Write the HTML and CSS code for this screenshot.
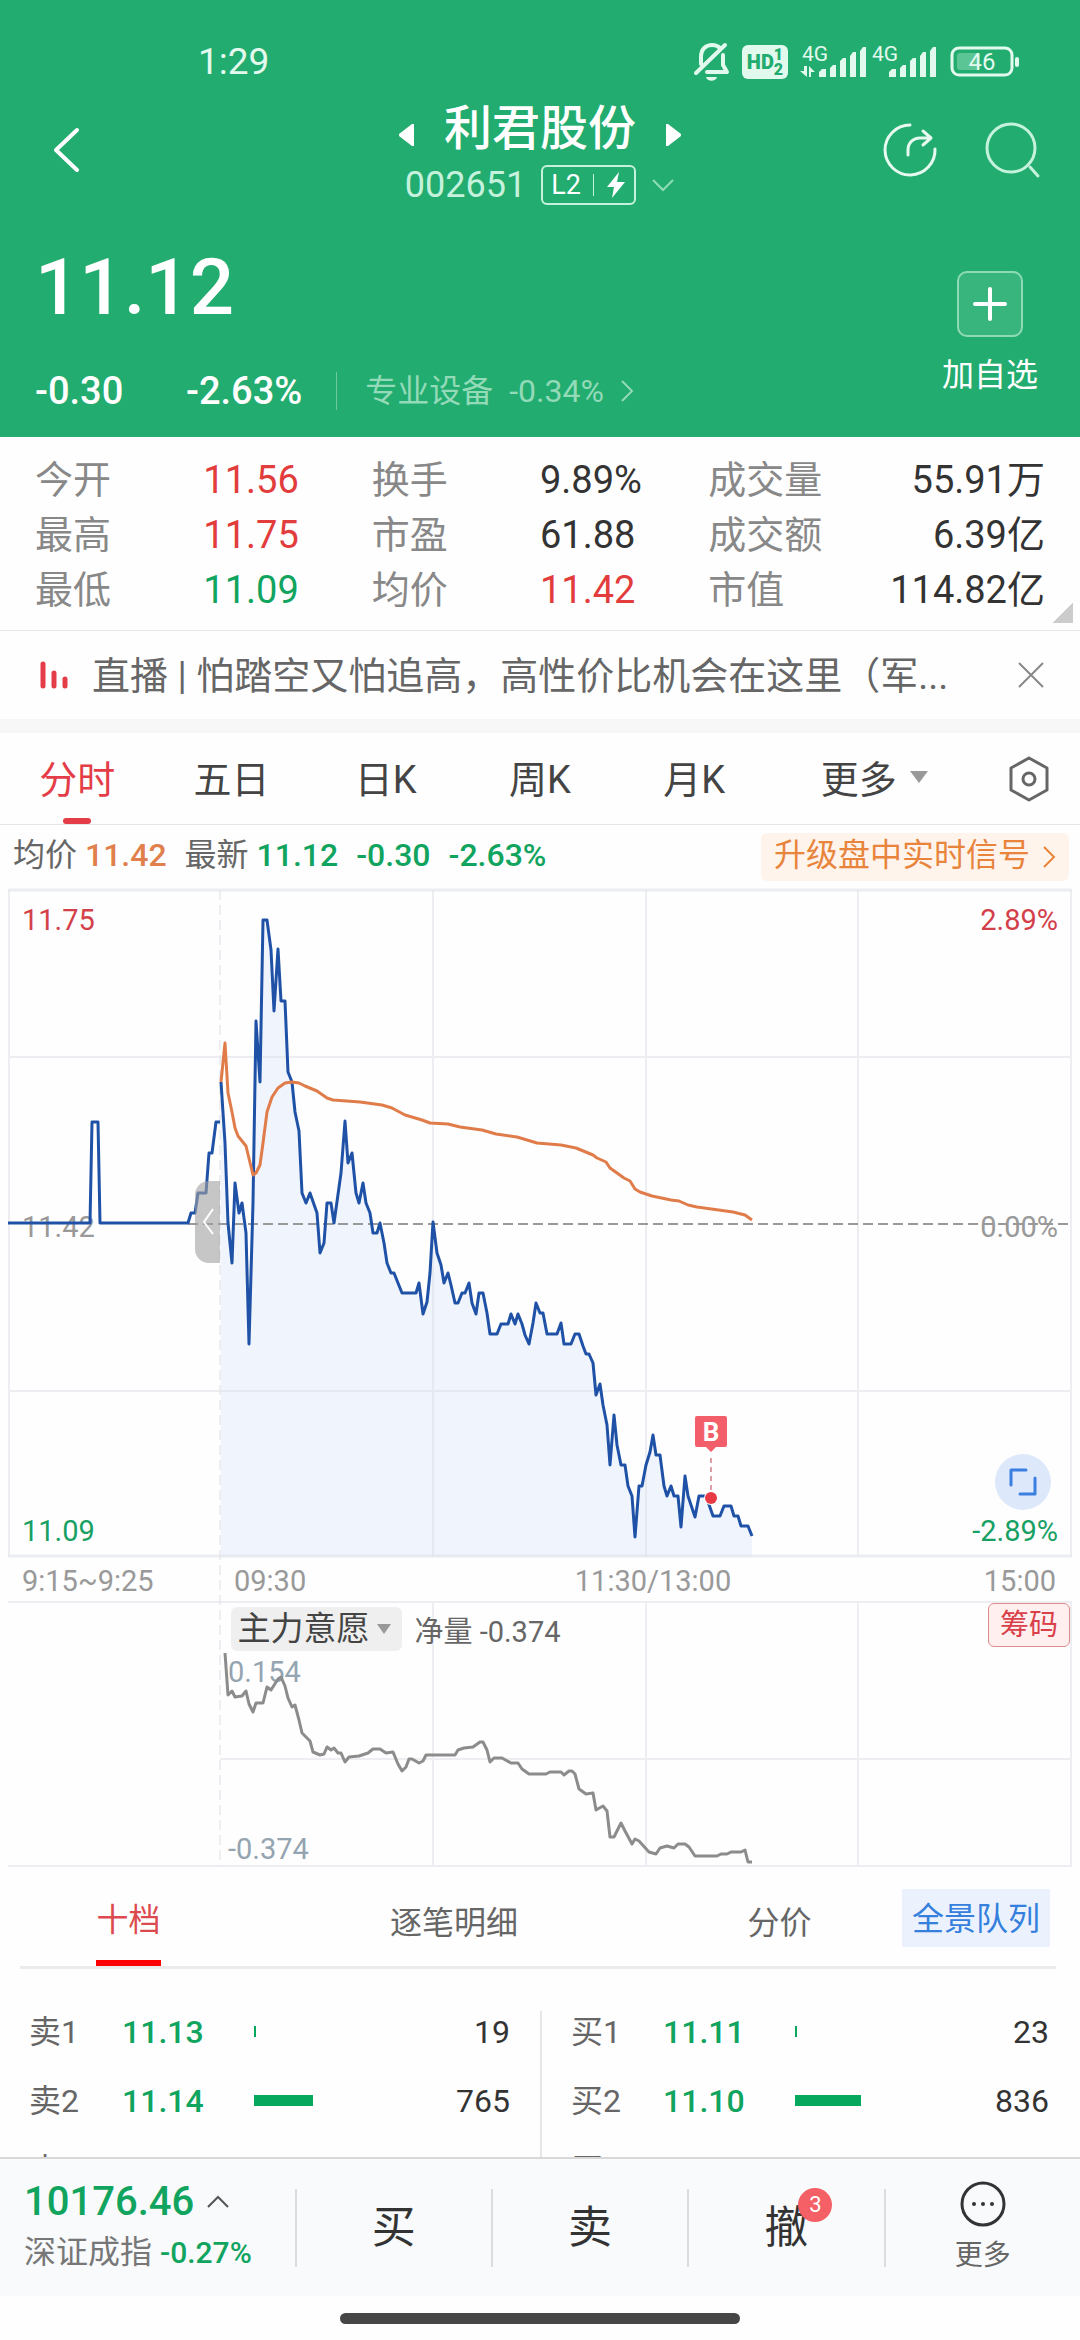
FILE: index.html
```html
<!DOCTYPE html>
<html lang="zh-CN">
<head>
    <meta charset="UTF-8">
    <meta name="viewport" content="width=device-width, initial-scale=1.0">
    <title>利君股份 002651</title>
    <link rel="stylesheet" href="styles.css">
</head>
<body>
<div class="app">
    <header class="header">
        <div class="status-bar">
            <span class="time">1:29</span>
            <div class="status-icons">
                <svg width="36" height="40" viewBox="0 0 36 40" fill="none" stroke="#e2f9ee" stroke-width="4" stroke-linecap="round" stroke-linejoin="round">
                    <path d="M7 22V15C7 7 12 3 18 3c4 0 6 1 8 3M29 13v10l4 7H13M2 31L31 3"/>
                    <path d="M12 35h11c-1 5-10 5-11 0z" fill="#e2f9ee" stroke="none"/>
                </svg>
                <span class="hd">HD<small>1<br>2</small></span>
                <svg class="signal-a" width="66" height="36" viewBox="0 0 66 36" fill="#e2f9ee">
                    <text x="2" y="17" font-size="21">4G</text>
                    <path d="M4 22h3v11L0 27h4zM9 33V22l6 6h-4v5zM19 33v-5l3-3h4v8zM30 33V24l3-3h3v12zM40 33V17l3-3h3v19zM50 33V12l3-4h3v25zM60 33V7l3-4h3v30z"/>
                </svg>
                <svg width="66" height="36" viewBox="0 0 66 36" fill="#e2f9ee">
                    <text x="0" y="17" font-size="21">4G</text>
                    <path d="M17 33v-5l3-3h4v8zM28 33V24l3-3h3v12zM38 33V17l3-3h3v19zM48 33V12l3-4h3v25zM58 33V7l3-4h3v30z"/>
                </svg>
                <svg class="battery" width="70" height="32" viewBox="0 0 70 32">
                    <rect x="2" y="2" width="60" height="27" rx="7" fill="none" stroke="#e2f9ee" stroke-width="3"/>
                    <rect x="7" y="7" width="23" height="17" rx="3" fill="#5cc595"/>
                    <rect x="65" y="11" width="4" height="10" rx="2" fill="#e2f9ee"/>
                    <text x="32" y="24" font-size="24" text-anchor="middle" fill="#e2f9ee">46</text>
                </svg>
            </div>
        </div>

        <nav class="nav">
            <button class="icon-btn back" aria-label="返回">
                <svg width="28" height="46" viewBox="0 0 28 46" fill="none" stroke="#fff" stroke-width="4" stroke-linecap="round" stroke-linejoin="round"><path d="M25 3L4 23l21 20"/></svg>
            </button>
            <div class="title-block">
                <div class="title-row">
                    <button class="icon-btn" aria-label="上一只"><svg width="17" height="24" viewBox="0 0 17 24"><path d="M16 1v22h-2L1 13v-2L14 1z" fill="#fff"/></svg></button>
                    <h1>利君股份</h1>
                    <button class="icon-btn" aria-label="下一只"><svg width="17" height="24" viewBox="0 0 17 24"><path d="M1 1v22h2l13-10v-2L3 1z" fill="#fff"/></svg></button>
                </div>
                <div class="code-row">
                    <span class="code">002651</span>
                    <span class="level">L2<i></i><svg width="20" height="28" viewBox="0 0 20 28"><path d="M13 1L1 16h7L6 27 19 11h-8z" fill="#fff"/></svg></span>
                    <svg width="24" height="14" viewBox="0 0 24 14" fill="none" stroke="#8fdcb7" stroke-width="2"><path d="M2 2l10 10L22 2"/></svg>
                </div>
            </div>
            <div class="actions">
                <button class="icon-btn" aria-label="分享">
                    <svg width="56" height="56" viewBox="0 0 56 56" fill="none" stroke="#e6faf0" stroke-width="3" stroke-linecap="round" stroke-linejoin="round"><path d="M28 3A25 25 0 1 0 53 27M26 33v-5c0-7 5-12 12-12h10M41 9l8 7-8 7"/></svg>
                </button>
                <button class="icon-btn" aria-label="搜索">
                    <svg width="56" height="56" viewBox="0 0 56 56" fill="none" stroke="#c5f2dc" stroke-width="3" stroke-linecap="round"><circle cx="27" cy="26" r="24"/><path d="M46 45l8 9"/></svg>
                </button>
            </div>
        </nav>

        <div class="quote">
            <div>
                <div class="price">11.12</div>
                <div class="change">
                    <span class="diff">-0.30</span>
                    <span class="pct">-2.63%</span>
                    <a class="sector" href="#sector">专业设备 <b>-0.34%</b>
                        <svg width="14" height="24" viewBox="0 0 14 24" fill="none" stroke="#93dab8" stroke-width="2"><path d="M2 2l10 10L2 22"/></svg>
                    </a>
                </div>
            </div>
            <button class="add">
                <span class="plus"><svg width="34" height="34" viewBox="0 0 34 34" stroke="#fff" stroke-width="4" stroke-linecap="round"><path d="M17 2v30M2 17h30"/></svg></span>
                加自选
            </button>
        </div>
    </header>

    <main class="main">
        <dl class="stats">
            <dt>今开</dt><dd class="up">11.56</dd>
            <dt>换手</dt><dd>9.89%</dd>
            <dt>成交量</dt><dd class="right">55.91万</dd>
            <dt>最高</dt><dd class="up">11.75</dd>
            <dt>市盈</dt><dd>61.88</dd>
            <dt>成交额</dt><dd class="right">6.39亿</dd>
            <dt>最低</dt><dd class="down">11.09</dd>
            <dt>均价</dt><dd class="up">11.42</dd>
            <dt>市值</dt><dd class="right">114.82亿</dd>
        </dl>

        <div class="notice">
            <svg width="28" height="28" viewBox="0 0 28 28" stroke="#e43d48" stroke-width="5" stroke-linecap="round"><path d="M3 3v22M14 12v13M25 18v7"/></svg>
            <p>直播 | 怕踏空又怕追高，高性价比机会在这里（军...</p>
            <button class="icon-btn" aria-label="关闭">
                <svg width="26" height="26" viewBox="0 0 26 26" stroke="#888" stroke-width="2"><path d="M1 1l24 24M25 1L1 25"/></svg>
            </button>
        </div>

        <div class="period-tabs">
            <button class="active">分时</button>
            <button>五日</button>
            <button>日K</button>
            <button>周K</button>
            <button>月K</button>
            <button class="wide">更多<i class="tri"></i></button>
            <button class="setting" aria-label="设置">
                <svg width="42" height="46" viewBox="0 0 42 46" fill="none" stroke="#666" stroke-width="3" stroke-linejoin="round"><path d="M21 2l18 10v22L21 44 3 34V12z"/><circle cx="21" cy="23" r="6"/></svg>
            </button>
        </div>

        <div class="chart-info">
            <p>
                <span>均价 <b class="avg">11.42</b></span>
                <span>最新 <b class="down">11.12</b></span>
                <b class="down">-0.30</b>
                <b class="down">-2.63%</b>
            </p>
            <a class="upgrade" href="#signal"><span>升级盘中实时信号</span>
                <svg width="14" height="24" viewBox="0 0 14 24" fill="none" stroke="#e8843c" stroke-width="2"><path d="M2 2l10 10L2 22"/></svg>
            </a>
        </div>

        <section class="chart">
            <svg class="chart-svg" viewBox="8 888 1064 980">
                <!-- price area -->
                <path fill="#eff4fd" d="M221 1082L225 1143 228 1223 232 1263 235 1183 239 1213 242 1203 246 1233 249 1344 253 1203 256 1021 260 1082 263 920 267 920 271 950 274 1011 278 949 281 1001 285 1001 288 1072 292 1082 295 1112 299 1131 302 1193 306 1203 310 1193 317 1213 320 1253 324 1243 327 1203 331 1203 334 1223 341 1173 345 1121 348 1163 352 1153 356 1193 359 1203 363 1183 366 1203 370 1213 373 1233 377 1233 380 1223 384 1243 387 1263 391 1273 394 1273 402 1293 416 1293 419 1283 423 1314 427 1302 430 1273 433 1222 437 1253 441 1265 444 1283 448 1273 451 1285 455 1303 458 1303 462 1293 465 1293 469 1283 472 1303 476 1314 479 1293 483 1293 487 1313 490 1334 497 1334 501 1324 508 1324 511 1314 515 1324 518 1314 522 1324 525 1335 529 1344 533 1323 536 1303 540 1313 543 1313 547 1334 557 1334 561 1323 564 1344 571 1344 575 1334 579 1334 583 1346 586 1354 589 1354 593 1363 596 1395 600 1384 603 1405 607 1425 610 1465 614 1415 617 1445 621 1465 625 1465 628 1486 632 1496 635 1537 639 1486 642 1486 646 1465 650 1452 653 1435 656 1455 660 1455 664 1486 667 1496 671 1486 674 1496 678 1496 681 1527 685 1476 688 1496 695 1517 699 1496 706 1496 713 1516 720 1516 724 1506 731 1506 734 1516 738 1516 741 1526 748 1526 752 1536V1557H221z"/>
                <!-- grid -->
                <g class="grid">
                    <path d="M8 890H1072M8 1556H1072" stroke-width="3"/>
                    <path d="M9 890V1556M1071 890V1556M9 1057H1071M9 1391H1071M433 890V1556M646 890V1556M858 890V1556"/>
                    <path d="M8 1602H1072M220 1759H1072M8 1866H1072M433 1602V1866M646 1602V1866M858 1602V1866M1071 1602V1866"/>
                    <path d="M220 890V1866" stroke-dasharray="10 5"/>
                </g>
                <path d="M188 1224H1068" stroke="#999" stroke-width="2" stroke-dasharray="10 5"/>
                <g class="label">
                    <text x="22" y="930" fill="#d3404a">11.75</text>
                    <text x="22" y="1237" fill="#999">11.42</text>
                    <text x="22" y="1541" fill="#17a063">11.09</text>
                    <text x="1058" y="930" class="end" fill="#d3404a">2.89%</text>
                    <text x="1058" y="1237" class="end" fill="#999">0.00%</text>
                    <text x="1058" y="1541" class="end" fill="#17a063">-2.89%</text>
                    <text x="22" y="1591" fill="#999">9:15~9:25</text>
                    <text x="234" y="1591" fill="#999">09:30</text>
                    <text x="653" y="1591" class="mid" fill="#999">11:30/13:00</text>
                    <text x="1056" y="1591" class="end" fill="#999">15:00</text>
                    <text x="228" y="1682" fill="#94a4b0">0.154</text>
                    <text x="228" y="1859" fill="#94a4b0">-0.374</text>
                </g>
                <!-- call auction -->
                <polyline class="line" points="8,1223 90,1223 92,1122 98,1122 100,1223 188,1223 191,1213 195,1213 198,1193 206,1193 209,1153 212,1153 216,1122 220,1122"/>
                <path d="M220 1181h-11a14 14 0 0 0-14 14v54a14 14 0 0 0 14 14h11z" fill="#a0a0a0" fill-opacity=".6"/>
                <path d="M213 1209l-9 13 9 12" fill="none" stroke="#fff" stroke-width="2"/>
                <polyline class="line" points="221,1082 225,1143 228,1223 232,1263 235,1183 239,1213 242,1203 246,1233 249,1344 253,1203 256,1021 260,1082 263,920 267,920 271,950 274,1011 278,949 281,1001 285,1001 288,1072 292,1082 295,1112 299,1131 302,1193 306,1203 310,1193 317,1213 320,1253 324,1243 327,1203 331,1203 334,1223 341,1173 345,1121 348,1163 352,1153 356,1193 359,1203 363,1183 366,1203 370,1213 373,1233 377,1233 380,1223 384,1243 387,1263 391,1273 394,1273 402,1293 416,1293 419,1283 423,1314 427,1302 430,1273 433,1222 437,1253 441,1265 444,1283 448,1273 451,1285 455,1303 458,1303 462,1293 465,1293 469,1283 472,1303 476,1314 479,1293 483,1293 487,1313 490,1334 497,1334 501,1324 508,1324 511,1314 515,1324 518,1314 522,1324 525,1335 529,1344 533,1323 536,1303 540,1313 543,1313 547,1334 557,1334 561,1323 564,1344 571,1344 575,1334 579,1334 583,1346 586,1354 589,1354 593,1363 596,1395 600,1384 603,1405 607,1425 610,1465 614,1415 617,1445 621,1465 625,1465 628,1486 632,1496 635,1537 639,1486 642,1486 646,1465 650,1452 653,1435 656,1455 660,1455 664,1486 667,1496 671,1486 674,1496 678,1496 681,1527 685,1476 688,1496 695,1517 699,1496 706,1496 713,1516 720,1516 724,1506 731,1506 734,1516 738,1516 741,1526 748,1526 752,1536"/>
                <!-- average price -->
                <polyline class="line avg-line" points="221,1082 225,1043 228,1093 232,1112 235,1128 238,1136 246,1146 253,1175 256,1173 260,1165 263,1143 267,1112 272,1097 278,1088 285,1083 292,1082 299,1083 305,1086 317,1091 327,1098 333,1100 360,1102 382,1105 392,1108 405,1115 422,1120 430,1123 448,1124 460,1127 482,1130 496,1134 517,1137 537,1143 561,1145 576,1148 593,1155 597,1158 606,1162 610,1168 624,1178 630,1181 635,1189 640,1192 652,1196 671,1200 679,1201 688,1205 697,1207 733,1212 745,1215 752,1220"/>
                <!-- buy marker -->
                <path d="M711 1458v34" stroke="#b8404c" stroke-width="1" stroke-dasharray="5 4"/>
                <path d="M697 1416h28a2 2 0 0 1 2 2v27a2 2 0 0 1-2 2h-9l-5 5-5-5h-9a2 2 0 0 1-2-2v-27a2 2 0 0 1 2-2z" fill="#f25f6b"/>
                <text x="711" y="1441" class="mid" font-size="26" font-weight="700" fill="#fff">B</text>
                <circle cx="711" cy="1498" r="7" fill="#fff"/>
                <circle cx="711" cy="1498" r="6" fill="#e83a45"/>
                <!-- main force -->
                <polyline class="line force-line" points="225,1653 228,1695 232,1691 235,1697 242,1696 246,1691 249,1704 253,1712 256,1703 263,1703 267,1687 271,1690 278,1679 281,1677 285,1686 288,1698 292,1707 295,1705 299,1720 302,1733 310,1741 313,1752 320,1755 324,1754 327,1747 331,1750 334,1748 338,1753 341,1753 345,1762 349,1757 359,1756 368,1753 373,1749 380,1749 386,1753 393,1752 398,1764 402,1771 406,1767 409,1759 412,1759 419,1763 423,1761 426,1755 455,1755 458,1750 464,1748 473,1747 480,1742 483,1742 487,1750 490,1762 494,1758 502,1758 511,1763 518,1763 522,1769 529,1774 546,1774 550,1772 561,1772 564,1775 569,1771 572,1771 575,1774 579,1789 586,1794 593,1793 596,1810 603,1806 607,1811 610,1837 614,1837 621,1823 625,1831 632,1844 635,1839 639,1841 649,1852 656,1854 660,1848 667,1846 674,1848 678,1844 685,1844 689,1847 695,1856 717,1856 721,1854 727,1854 731,1852 741,1852 745,1850 748,1862 752,1862"/>
            </svg>
            <button class="expand" aria-label="全屏">
                <svg width="28" height="28" viewBox="0 0 28 28" fill="none" stroke="#3b7fe0" stroke-width="3" stroke-linecap="round" stroke-linejoin="round"><path d="M2 17V2h15M26 10v16H11"/></svg>
            </button>
            <div class="indicator">
                <button class="indicator-name">主力意愿<i class="tri"></i></button>
                <span>净量 -0.374</span>
            </div>
            <button class="chips">筹码</button>
        </section>

        <div class="depth-tabs">
            <button class="active">十档</button>
            <button>逐笔明细</button>
            <button>分价</button>
            <button class="queue">全景队列</button>
        </div>

        <div class="depth">
            <table>
                <tr><th>卖1</th><td class="down">11.13</td><td><i class="bar" style="width: 2px"></i></td><td class="vol">19</td></tr>
                <tr><th>卖2</th><td class="down">11.14</td><td><i class="bar" style="width: 59px"></i></td><td class="vol">765</td></tr>
                <tr><th>卖3</th><td></td><td></td><td></td></tr>
            </table>
            <table>
                <tr><th>买1</th><td class="down">11.11</td><td><i class="bar" style="width: 2px"></i></td><td class="vol">23</td></tr>
                <tr><th>买2</th><td class="down">11.10</td><td><i class="bar" style="width: 66px"></i></td><td class="vol">836</td></tr>
                <tr><th>买3</th><td></td><td></td><td></td></tr>
            </table>
        </div>
    </main>

    <footer class="bottom-bar">
        <a class="index" href="#index">
            <span class="index-value">10176.46
                <svg width="24" height="14" viewBox="0 0 24 14" fill="none" stroke="#555" stroke-width="2"><path d="M2 12L12 2l10 10"/></svg>
            </span>
            <span class="index-name">深证成指 <b>-0.27%</b></span>
        </a>
        <button class="trade"><span>买</span></button>
        <button class="trade"><span>卖</span></button>
        <button class="trade"><span>撤<em>3</em></span></button>
        <button class="more">
            <svg width="48" height="48" viewBox="0 0 48 48"><circle cx="24" cy="24" r="21" fill="none" stroke="#333" stroke-width="3"/><g fill="#333"><circle cx="15" cy="24" r="2"/><circle cx="24" cy="24" r="2"/><circle cx="33" cy="24" r="2"/></g></svg>
            更多
        </button>
    </footer>
    <div class="home"><i></i></div>
</div>
</body>
</html>
```

FILE: styles.css
```css
* {
    box-sizing: border-box;
}
body {
    margin: 0;
    font-family: Roboto, "Noto Sans CJK SC", sans-serif;
    color: #333;
    background-color: #fefefe;
}
h1, p, dl, dd {
    margin: 0;
}
button {
    font-family: inherit;
    color: inherit;
    background: none;
    border: none;
    padding: 0;
    cursor: pointer;
}
a {
    text-decoration: none;
}
b, th {
    font-weight: 500;
}
svg {
    display: block;
    flex-shrink: 0;
    overflow: visible;
}
.app {
    display: flex;
    flex-direction: column;
    height: 100vh;
}
.up {
    color: #e23c3c;
}
.down {
    color: #10a45f;
}
.tri {
    border: 9px solid transparent;
    border-top: 12px solid #999;
    border-bottom: 0;
}

/* header */
.header {
    background-color: #22ac6f;
    color: white;
    flex-shrink: 0;
}
.status-bar {
    display: flex;
    justify-content: space-between;
    align-items: center;
    height: 84px;
    padding: 40px 60px 0 198px;
}
.time {
    font-size: 37px;
    line-height: 44px;
    color: #e2f9ee;
}
.status-icons {
    display: flex;
    align-items: center;
}
.hd {
    display: flex;
    align-items: center;
    justify-content: center;
    width: 46px;
    height: 34px;
    margin: 0 12px;
    border-radius: 6px;
    background-color: #e2f9ee;
    color: #22ac6f;
    font-size: 20px;
    font-weight: 900;
}
.hd small {
    font-size: 16px;
    line-height: 15px;
}
.signal-a {
    margin-right: 6px;
}
.battery {
    margin-left: 12px;
}
.nav {
    display: grid;
    grid-template-columns: 1fr auto 1fr;
    align-items: center;
    height: 132px;
    padding: 0 40px;
}
.back {
    justify-self: start;
    padding-left: 12px;
}
.title-block {
    padding-top: 5px;
}
.title-row, .code-row {
    display: flex;
    align-items: center;
    justify-content: center;
}
.title-row {
    gap: 29px;
    height: 56px;
    margin-bottom: 8px;
}
.title-row .icon-btn {
    padding-top: 12px;
}
h1 {
    font-size: 48px;
    line-height: 56px;
    font-weight: 500;
}
.code-row {
    gap: 15px;
    height: 40px;
}
.code {
    font-size: 36px;
    color: #c5f2dc;
}
.level {
    display: flex;
    align-items: center;
    width: 95px;
    height: 40px;
    padding: 0 8px;
    justify-content: space-between;
    border: 2px solid #c5f2dc;
    border-radius: 6px;
    font-size: 27px;
}
.level i {
    width: 1px;
    height: 22px;
    background-color: #c5f2dc;
}
.actions {
    display: flex;
    justify-self: end;
    gap: 46px;
}
.quote {
    display: flex;
    justify-content: space-between;
    padding: 32px 42px 26px 35px;
}
.price {
    font-size: 78px;
    line-height: 80px;
    font-weight: 500;
    margin-bottom: 43px;
}
.change {
    display: flex;
    align-items: center;
    height: 40px;
    font-size: 38px;
    font-weight: 500;
}
.diff {
    width: 151px;
}
.pct {
    padding-right: 34px;
}
.sector {
    display: flex;
    align-items: center;
    gap: 16px;
    height: 38px;
    padding-left: 28px;
    border-left: 1px solid #6cc99f;
    color: #93dab8;
    font-size: 32px;
    line-height: 34px;
    font-weight: 400;
}
.sector b {
    font-weight: 400;
}
.add {
    display: flex;
    flex-direction: column;
    align-items: center;
    gap: 18px;
    padding-top: 23px;
    font-size: 32px;
    line-height: 40px;
}
.plus {
    display: flex;
    align-items: center;
    justify-content: center;
    width: 66px;
    height: 66px;
    border: 2px solid #8fdab6;
    border-radius: 10px;
    background-color: #38b47d;
}

/* stats */
.main {
    flex: 1;
    min-height: 0;
    overflow: hidden;
}
.stats {
    display: grid;
    grid-template-columns: repeat(6, 1fr);
    padding: 16px 35px 12px;
    font-size: 38px;
    line-height: 55px;
    border-bottom: 1px solid #e6e6e6;
    background: linear-gradient(135deg, transparent 50%, #ccc 50%) right 7px bottom 7px / 21px 21px no-repeat;
}
.stats dt {
    color: #888;
}
.stats dd {
    font-weight: 400;
    white-space: nowrap;
}
.stats .right {
    text-align: right;
}
.notice {
    display: flex;
    align-items: center;
    gap: 24px;
    height: 88px;
    padding: 0 36px 0 40px;
    font-size: 38px;
    color: #666;
}
.notice p {
    flex: 1;
    overflow: hidden;
    padding-bottom: 6px;
    white-space: nowrap;
}

/* chart */
.period-tabs {
    display: flex;
    height: 106px;
    border-top: 14px solid #f7f7f7;
    border-bottom: 1px solid #e6e6e6;
}
.period-tabs button {
    display: flex;
    flex: 3 1 0;
    align-items: center;
    justify-content: center;
    gap: 13px;
    padding-bottom: 4px;
    font-size: 38px;
    color: #444;
}
.period-tabs .wide {
    flex-grow: 4;
}
.period-tabs .setting {
    flex-grow: 2;
    padding: 0;
}
.period-tabs .active {
    position: relative;
    color: #e43d48;
}
.period-tabs .active::after {
    content: "";
    position: absolute;
    left: calc(50% - 14px);
    bottom: 0;
    width: 28px;
    height: 6px;
    border-radius: 3px;
    background-color: #e43d48;
}
.chart-info {
    display: flex;
    align-items: center;
    justify-content: space-between;
    height: 63px;
    padding: 0 11px 0 13px;
    font-size: 32px;
    line-height: 44px;
    color: #666;
}
.chart-info p {
    display: flex;
    align-items: baseline;
    gap: 18px;
    padding-bottom: 4px;
}
.chart-info .avg {
    color: #e0804c;
}
.upgrade {
    display: flex;
    align-items: center;
    gap: 12px;
    height: 48px;
    padding: 0 13px;
    border-radius: 6px;
    background-color: #fff4ec;
    color: #e8843c;
}
.upgrade span {
    padding-bottom: 4px;
}
.chart {
    position: relative;
    margin: 0 8px;
}
.chart-svg {
    width: 100%;
    height: auto;
}
.grid {
    fill: none;
    stroke: #dfe3e8;
    stroke-opacity: 0.6;
    stroke-width: 2;
}
.label {
    font-size: 29px;
}
.end {
    text-anchor: end;
}
.mid {
    text-anchor: middle;
}
.line {
    fill: none;
    stroke: #1f52a6;
    stroke-width: 3;
    stroke-linejoin: round;
}
.avg-line {
    stroke: #e07c4a;
}
.force-line {
    stroke: #8c8c8c;
}
.expand {
    position: absolute;
    display: flex;
    align-items: center;
    justify-content: center;
    right: 21px;
    bottom: 358px;
    width: 56px;
    height: 56px;
    border-radius: 50%;
    background-color: #dde8fb;
}
.indicator {
    position: absolute;
    display: flex;
    align-items: center;
    gap: 12px;
    left: 21%;
    bottom: 217px;
    font-size: 29px;
    color: #666;
}
.indicator-name {
    display: flex;
    align-items: center;
    gap: 8px;
    height: 44px;
    padding: 0 11px 0 6px;
    border-radius: 6px;
    background-color: #efefef;
    font-size: 33px;
    line-height: 40px;
    color: #444;
}
.indicator-name .tri {
    border-width: 10px 7px 0;
}
.chips {
    position: absolute;
    right: 2px;
    bottom: 221px;
    width: 82px;
    height: 44px;
    border: 1px solid #dc8b8f;
    border-radius: 6px;
    background-color: #fff0ef;
    font-size: 29px;
    line-height: 40px;
    color: #d9404a;
}

/* order book */
.depth-tabs {
    display: grid;
    grid-template-columns: 1fr 2fr 1fr 162px;
    margin: 0 24px 0 20px;
    padding-right: 6px;
    border-bottom: 3px solid #ebebeb;
    height: 101px;
}
.depth-tabs button {
    justify-self: center;
    padding-top: 6px;
    font-size: 32px;
    color: #666;
}
.depth-tabs .active {
    border-bottom: 6px solid #f00;
    color: #dc4a4f;
}
.depth-tabs .queue {
    justify-self: end;
    width: 148px;
    height: 58px;
    margin-top: 21px;
    padding: 0 0 4px;
    background-color: #ebf2fe;
    color: #3480dc;
}
.depth {
    display: grid;
    grid-template-columns: 1fr 1fr;
    margin-top: 42px;
}
table {
    width: 100%;
    table-layout: fixed;
    border-collapse: collapse;
    font-size: 32px;
}
.depth table + table {
    border-left: 2px solid #e6e6e6;
}
tr {
    height: 69px;
}
th, td {
    padding: 0 0 28px;
    line-height: 40px;
    text-align: left;
}
th {
    width: 122px;
    padding-left: 29px;
    font-weight: 400;
    color: #666;
}
td:nth-child(2) {
    width: 132px;
    font-weight: 500;
}
.vol {
    padding-right: 30px;
    text-align: right;
}
.bar {
    display: block;
    height: 11px;
    background-color: #05a85c;
}

/* bottom bar */
.bottom-bar {
    display: grid;
    grid-template-columns: 3fr 2fr 2fr 2fr 2fr;
    align-items: center;
    flex-shrink: 0;
    height: 139px;
    border-top: 2px solid #d8d8d8;
    background-color: #f9fafc;
}
.index {
    padding-left: 24px;
    color: #10a45f;
}
.index-value {
    display: flex;
    align-items: center;
    gap: 12px;
    font-size: 40px;
    line-height: 50px;
    font-weight: 500;
}
.index-name {
    display: block;
    color: #777;
    font-size: 32px;
    line-height: 50px;
    white-space: nowrap;
}
.index-name b {
    color: #10a45f;
    font-size: 30px;
}
.trade, .more {
    height: 78px;
    border-left: 2px solid #dcdcdc;
    font-size: 44px;
}
.trade {
    padding-bottom: 8px;
}
.trade span {
    position: relative;
}
.trade em {
    position: absolute;
    top: -14px;
    right: -24px;
    width: 34px;
    height: 34px;
    border-radius: 50%;
    background-color: #f55f66;
    color: white;
    font-size: 22px;
    line-height: 34px;
    font-style: normal;
}
.more {
    display: flex;
    flex-direction: column;
    align-items: center;
    justify-content: center;
    gap: 8px;
    font-size: 28px;
    line-height: 40px;
    color: #666;
}
.home {
    display: flex;
    align-items: center;
    justify-content: center;
    flex-shrink: 0;
    height: 44px;
}
.home i {
    width: 37%;
    height: 11px;
    margin-bottom: -1px;
    border-radius: 6px;
    background-color: #464646;
}
```
